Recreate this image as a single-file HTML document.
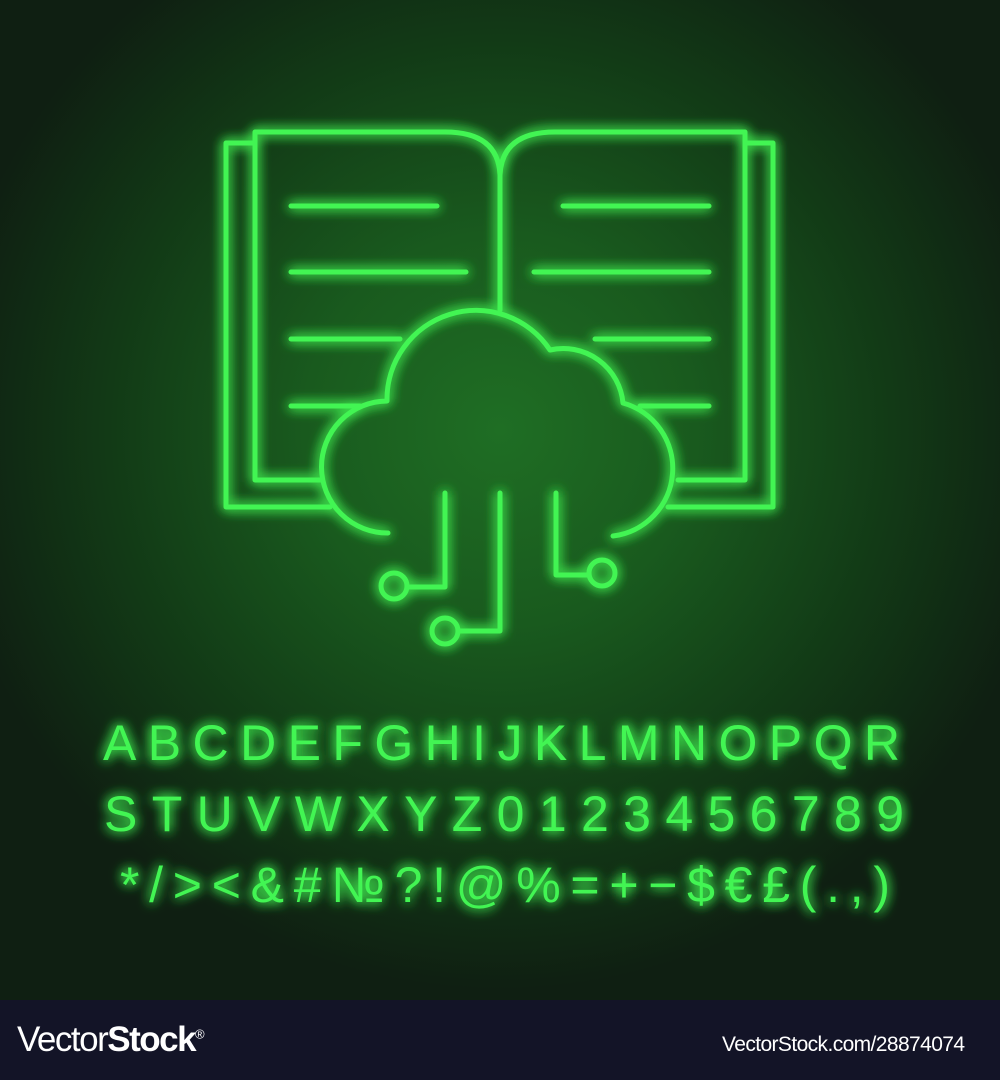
<!DOCTYPE html>
<html><head><meta charset="utf-8"><style>
html,body{margin:0;padding:0;}
body{width:1000px;height:1080px;overflow:hidden;background:#13142a;position:relative;font-family:"Liberation Sans",sans-serif;}
#main{position:absolute;left:0;top:0;width:1000px;height:1000px;background:radial-gradient(ellipse 560px 560px at 500px 430px,#1f6e24 0%,#195a1e 35%,#123a16 70%,#0f1f12 100%);}
#foot{position:absolute;left:0;top:1000px;width:1000px;height:80px;background:#131427;color:#fff;}
</style></head><body>
<div id="main">
<svg width="1000" height="1000" viewBox="0 0 1000 1000">
<defs>
<filter id="g" x="-20%" y="-20%" width="140%" height="140%">
<feGaussianBlur in="SourceGraphic" stdDeviation="6" result="b"/>
<feMerge><feMergeNode in="b"/><feMergeNode in="b"/><feMergeNode in="SourceGraphic"/></feMerge>
</filter>
</defs>
<g filter="url(#g)" fill="none" stroke="#42f552" stroke-width="5" stroke-linecap="round" stroke-linejoin="round">
<path d="M255 143 H226 V507 H330"/>
<path d="M745 143 H773 V507 H668"/>
<path d="M322 480 H255 V132 H445 Q498 132 500 175 Q502 132 555 132 H745 V480 H678"/>
<path d="M500 175 V310"/>
<path d="M291 206 H437 M291 272 H466 M291 339 H400 M291 406 H360"/>
<path d="M563 206 H709 M534 272 H709 M595 339 H709 M640 406 H709"/>
<path d="M388 533 A66 66 0 0 1 387 401 A89 89 0 0 1 550 350 A60 60 0 0 1 623 403 A68 68 0 0 1 613 536"/>
<path d="M445 493 V587 H408"/>
<circle cx="394" cy="586" r="13"/>
<path d="M500 493 V631 H459"/>
<circle cx="445" cy="631" r="13"/>
<path d="M556 493 V575 H589"/>
<circle cx="602" cy="573" r="13"/>
</g>
<g filter="url(#g)" fill="#42f552" font-family="Liberation Sans, sans-serif" font-size="50">
<text x="103" y="760" textLength="797" lengthAdjust="spacing">ABCDEFGHIJKLMNOPQR</text>
<text x="104" y="831" textLength="800" lengthAdjust="spacing">STUVWXYZ0123456789</text>
<text x="120" y="902" textLength="770" lengthAdjust="spacing">*/&gt;&lt;&amp;#№?!@%=+−$€£(.,)</text>
</g>
</svg>
</div>
<div id="foot">
<div style="position:absolute;left:17px;top:20px;font-size:35px;letter-spacing:-1.5px;">Vector<b>Stock</b><sup style="font-size:13px;">®</sup></div>
<div style="position:absolute;left:722px;top:33px;font-size:21px;letter-spacing:-0.6px;">VectorStock.com/28874074</div>
</div>
</body></html>
